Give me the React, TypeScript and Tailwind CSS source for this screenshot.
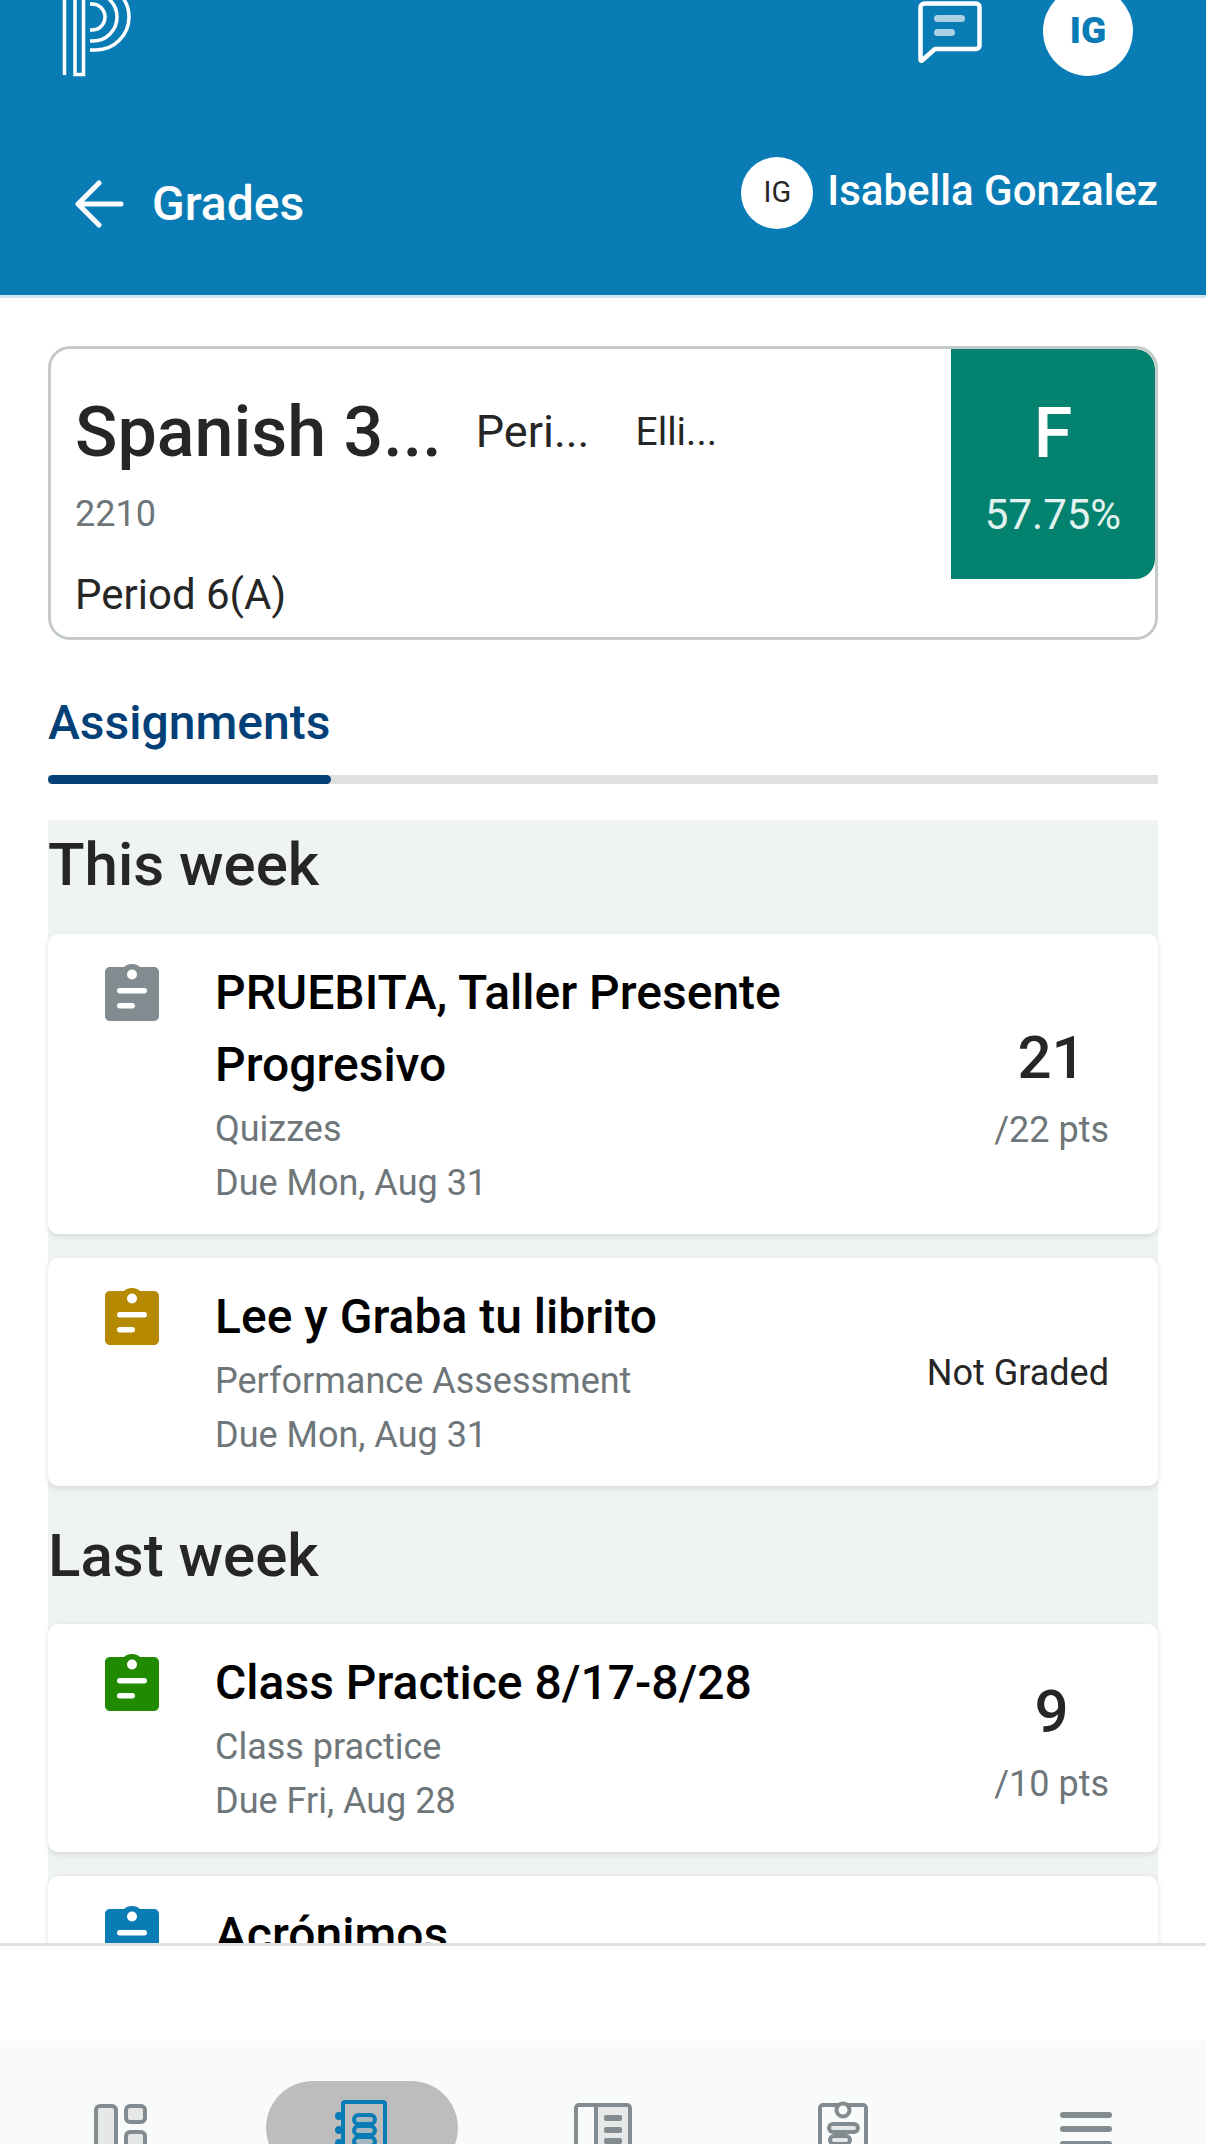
const font = { fontFamily: "Roboto, 'Liberation Sans', sans-serif" };

function Clipboard({ color }: { color: string }) {
  return (
    <svg viewBox="0 0 54 57" className="h-[57px] w-[54px] shrink-0" style={{ color }}>
      <path
        fill="currentColor"
        d="M5 3h14c2-2 4.500-3 8-3s6 1 8 3h14c2.800 0 5 2.200 5 5v44c0 2.800-2.200 5-5 5H5c-2.800 0-5-2.200-5-5V8c0-2.800 2.200-5 5-5z"
      />
      <circle cx="27" cy="10.500" r="5" fill="#fff" />
      <rect x="12" y="24" width="30" height="5.500" rx="2.750" fill="#fff" />
      <rect x="12" y="39" width="18" height="5.500" rx="2.750" fill="#fff" />
    </svg>
  );
}

function Logo() {
  return (
    <svg viewBox="60 0 75 78" className="h-[78px] w-[75px]" fill="none" stroke="#fff" strokeWidth="3.500">
      <path d="M64.500 0v75" />
      <path d="M75 0v74.500h8.500V0" />
      <path d="M90 50h6a33 33 0 0 0 0-66h-6" />
      <path d="M90 41h3a24 24 0 0 0 0-48h-3" />
      <path d="M90 30h2a13 13 0 0 0 0-26h-2" />
    </svg>
  );
}

function AssignmentCard({
  color,
  title,
  category,
  due,
  right,
}: {
  color: string;
  title: string[];
  category?: string;
  due?: string;
  right?: React.ReactNode;
}) {
  return (
    <div className="flex rounded-[10px] bg-white pt-[30px] pb-[24px] pl-[57px] pr-[49px] shadow-[0_2px_6px_rgba(0,0,0,0.12)]">
      <Clipboard color={color} />
      <div className="ml-[56px] min-w-0 flex-1">
        <div className="text-[48px] leading-[72px] font-medium text-black -mt-[7px]">
          {title.map((t) => (
            <div key={t}>{t}</div>
          ))}
        </div>
        <div className="mt-[1px] text-[36px] leading-[54px] text-[#6e7679]">{category}</div>
        <div className="text-[36px] leading-[54px] text-[#6e7679]">{due}</div>
      </div>
      <div className="flex items-center">{right}</div>
    </div>
  );
}

function Points({ score, total }: { score: string; total: string }) {
  return (
    <div className="mt-[1px] text-center">
      <div className="text-[60px] leading-[70px] font-medium text-[#262626]">{score}</div>
      <div className="mt-[14px] text-[36px] leading-[46px] text-[#6e7679]">{total}</div>
    </div>
  );
}

function NavIcon({ children }: { children: React.ReactNode }) {
  return (
    <svg viewBox="0 0 60 60" className="h-[60px] w-[60px]" fill="none" strokeWidth="4">
      {children}
    </svg>
  );
}

export default function App() {
  return (
    <div className="flex h-[2144px] w-[1206px] flex-col overflow-hidden bg-white" style={font}>
      {/* Header */}
      <header className="h-[298px] shrink-0 border-b-[3px] border-[#cfe5f0] bg-[#0a7cb5] px-[60px]">
        <div className="flex h-[76px] items-start justify-between pr-[13px]">
          <Logo />
          <div className="flex items-start">
            <svg viewBox="0 0 64 64" className="h-[64px] w-[64px]" fill="none">
              <path
                d="M7 3.500h51c2 0 3.500 1.500 3.500 3.500v38.500c0 2-1.500 3.500-3.500 3.500H17L4 60.500c-.8.700-1.500 0-1.500-1V7c0-2 2-3.500 4.500-3.500z"
                stroke="#fff"
                strokeWidth="4.500"
                strokeLinejoin="round"
              />
              <rect x="16" y="15" width="31" height="7" rx="3.500" fill="#a9d2e6" />
              <rect x="16" y="29" width="21" height="7" rx="3.500" fill="#a9d2e6" />
            </svg>
            <div className="-mt-[14px] ml-[61px] flex h-[90px] w-[90px] items-center justify-center rounded-full bg-white text-[37px] font-black text-[#0a7cb5]">
              IG
            </div>
          </div>
        </div>
        <div className="mt-[81px] flex items-start justify-between">
          <div className="mt-[17px] flex items-center">
            <svg viewBox="0 0 50 50" className="ml-[15px] h-[50px] w-[50px]" fill="none" stroke="#fff" strokeWidth="5" strokeLinecap="round" strokeLinejoin="round">
              <path d="M46 25H4M24 4 3 25l21 21" />
            </svg>
            <span className="ml-[27px] text-[48px] leading-[60px] font-medium text-white">Grades</span>
          </div>
          <div className="-mr-[12px] flex items-start">
            <div className="flex h-[72px] w-[72px] items-center justify-center rounded-full bg-white text-[29px] text-[#262626]">
              IG
            </div>
            <span className="mt-[4px] ml-[14px] text-[42px] leading-[60px] font-medium text-white">Isabella Gonzalez</span>
          </div>
        </div>
      </header>

      {/* Scrolling content */}
      <main className="min-h-0 flex-1 overflow-hidden px-[48px] pt-[48px]">
        <div className="flex h-[294px] overflow-hidden rounded-[22px] border-[3px] border-[#c4caca]">
          <div className="min-w-0 flex-1 pl-[24px]">
            <div className="mt-[41px] flex items-center">
              <span className="text-[70px] leading-[84px] font-medium text-[#262626]">Spanish 3...</span>
              <span className="ml-[34px] text-[45px] text-[#262626]">Peri...</span>
              <span className="ml-[46px] text-[39px] text-[#262626]">Elli...</span>
            </div>
            <div className="mt-[15px] text-[36px] leading-[50px] text-[#6e7679]">2210</div>
            <div className="mt-[28px] text-[42px] leading-[56px] text-[#262626]">Period 6(A)</div>
          </div>
          <div className="flex h-[230px] w-[204px] shrink-0 flex-col items-center rounded-br-[20px] rounded-tr-[20px] bg-[#038270] text-white">
            <div className="mt-[43px] text-[70px] leading-[82px] font-medium">F</div>
            <div className="mt-[14px] text-[42px] leading-[54px] text-[#e2f2ef]">57.75%</div>
          </div>
        </div>

        {/* Tabs */}
        <div className="mt-[53px] text-[48px] leading-[60px] font-medium text-[#034078]">Assignments</div>
        <div className="mt-[22px] h-[9px] bg-[#dfe1e3]">
          <div className="h-full w-[283px] rounded-[5px] bg-[#034078]" />
        </div>

        {/* Assignment list */}
        <div className="mt-[36px] bg-[#f0f3f4] pb-[40px]">
          <h2 className="pt-[11px] pb-[35px] text-[60px] leading-[68px] font-medium text-[#262626]">This week</h2>
          <div className="flex flex-col gap-[24px]">
            <AssignmentCard
              color="#828b8f"
              title={["PRUEBITA, Taller Presente", "Progresivo"]}
              category="Quizzes"
              due="Due Mon, Aug 31"
              right={<Points score="21" total="/22 pts" />}
            />
            <AssignmentCard
              color="#b58900"
              title={["Lee y Graba tu librito"]}
              category="Performance Assessment"
              due="Due Mon, Aug 31"
              right={<span className="pb-[5px] text-[36px] text-[#262626]">Not Graded</span>}
            />
          </div>
          <h2 className="pt-[36px] pb-[34px] text-[60px] leading-[68px] font-medium text-[#262626]">Last week</h2>
          <div className="flex flex-col gap-[24px]">
            <AssignmentCard
              color="#218a00"
              title={["Class Practice 8/17-8/28"]}
              category="Class practice"
              due="Due Fri, Aug 28"
              right={<Points score="9" total="/10 pts" />}
            />
            <AssignmentCard color="#0a7cb5" title={["Acrónimos"]} />
          </div>
        </div>
      </main>

      {/* Footer + bottom nav */}
      <div className="h-[98px] shrink-0 border-t-[3px] border-[#dfe1e3] bg-white" />
      <nav className="grid h-[103px] shrink-0 grid-cols-5 overflow-hidden bg-[#f9fafa]">
        <div className="flex justify-center pt-[59px]">
          <NavIcon>
            <g stroke="#828b8f" fill="#e6e8e8">
              <rect x="5" y="6" width="20" height="70" rx="4" />
              <rect x="35" y="6" width="19" height="16" rx="4" />
              <rect x="35" y="32" width="19" height="40" rx="4" />
            </g>
          </NavIcon>
        </div>
        <div className="flex justify-center pt-[40px]">
          <div className="flex h-[94px] w-[192px] justify-center rounded-full bg-[#bdbdbd] pt-[19px]">
            <NavIcon>
              <g stroke="#0a7cb5">
                <rect x="11" y="2" width="42" height="70" rx="2" />
                <rect x="22" y="15" width="21" height="9" rx="4.500" fill="#a3b8c0" />
                <rect x="22" y="26" width="21" height="9" rx="4.500" fill="#a3b8c0" />
                <rect x="22" y="37" width="21" height="9" rx="4.500" fill="#a3b8c0" />
              </g>
              <g fill="#0a7cb5">
                <circle cx="7" cy="16" r="4" />
                <circle cx="7" cy="30" r="4" />
                <circle cx="7" cy="43" r="4" />
              </g>
            </NavIcon>
          </div>
        </div>
        <div className="flex justify-center pt-[59px]">
          <NavIcon>
            <rect x="23" y="5" width="34" height="70" fill="#e6e8e8" />
            <rect x="3" y="5" width="54" height="70" rx="3" stroke="#828b8f" />
            <path d="M23 5v70" stroke="#828b8f" />
            <g fill="#828b8f">
              <rect x="31" y="15" width="18" height="6" rx="2" />
              <rect x="31" y="27" width="18" height="6" rx="2" />
              <rect x="31" y="38" width="18" height="6" rx="2" />
            </g>
          </NavIcon>
        </div>
        <div className="flex justify-center pt-[59px]">
          <NavIcon>
            <rect x="6" y="5" width="46" height="70" rx="3" stroke="#828b8f" />
            <circle cx="29" cy="10" r="6.500" fill="#f9fafa" stroke="#828b8f" />
            <rect x="15" y="24" width="29" height="8" rx="4" fill="#e6e8e8" stroke="#828b8f" />
            <rect x="16" y="36" width="20" height="8" rx="4" fill="#e6e8e8" stroke="#828b8f" />
          </NavIcon>
        </div>
        <div className="flex justify-center pt-[59px]">
          <NavIcon>
            <path d="M8 15h46M8 29h46M8 44h46" stroke="#828b8f" strokeWidth="6" strokeLinecap="round" />
          </NavIcon>
        </div>
      </nav>
    </div>
  );
}
